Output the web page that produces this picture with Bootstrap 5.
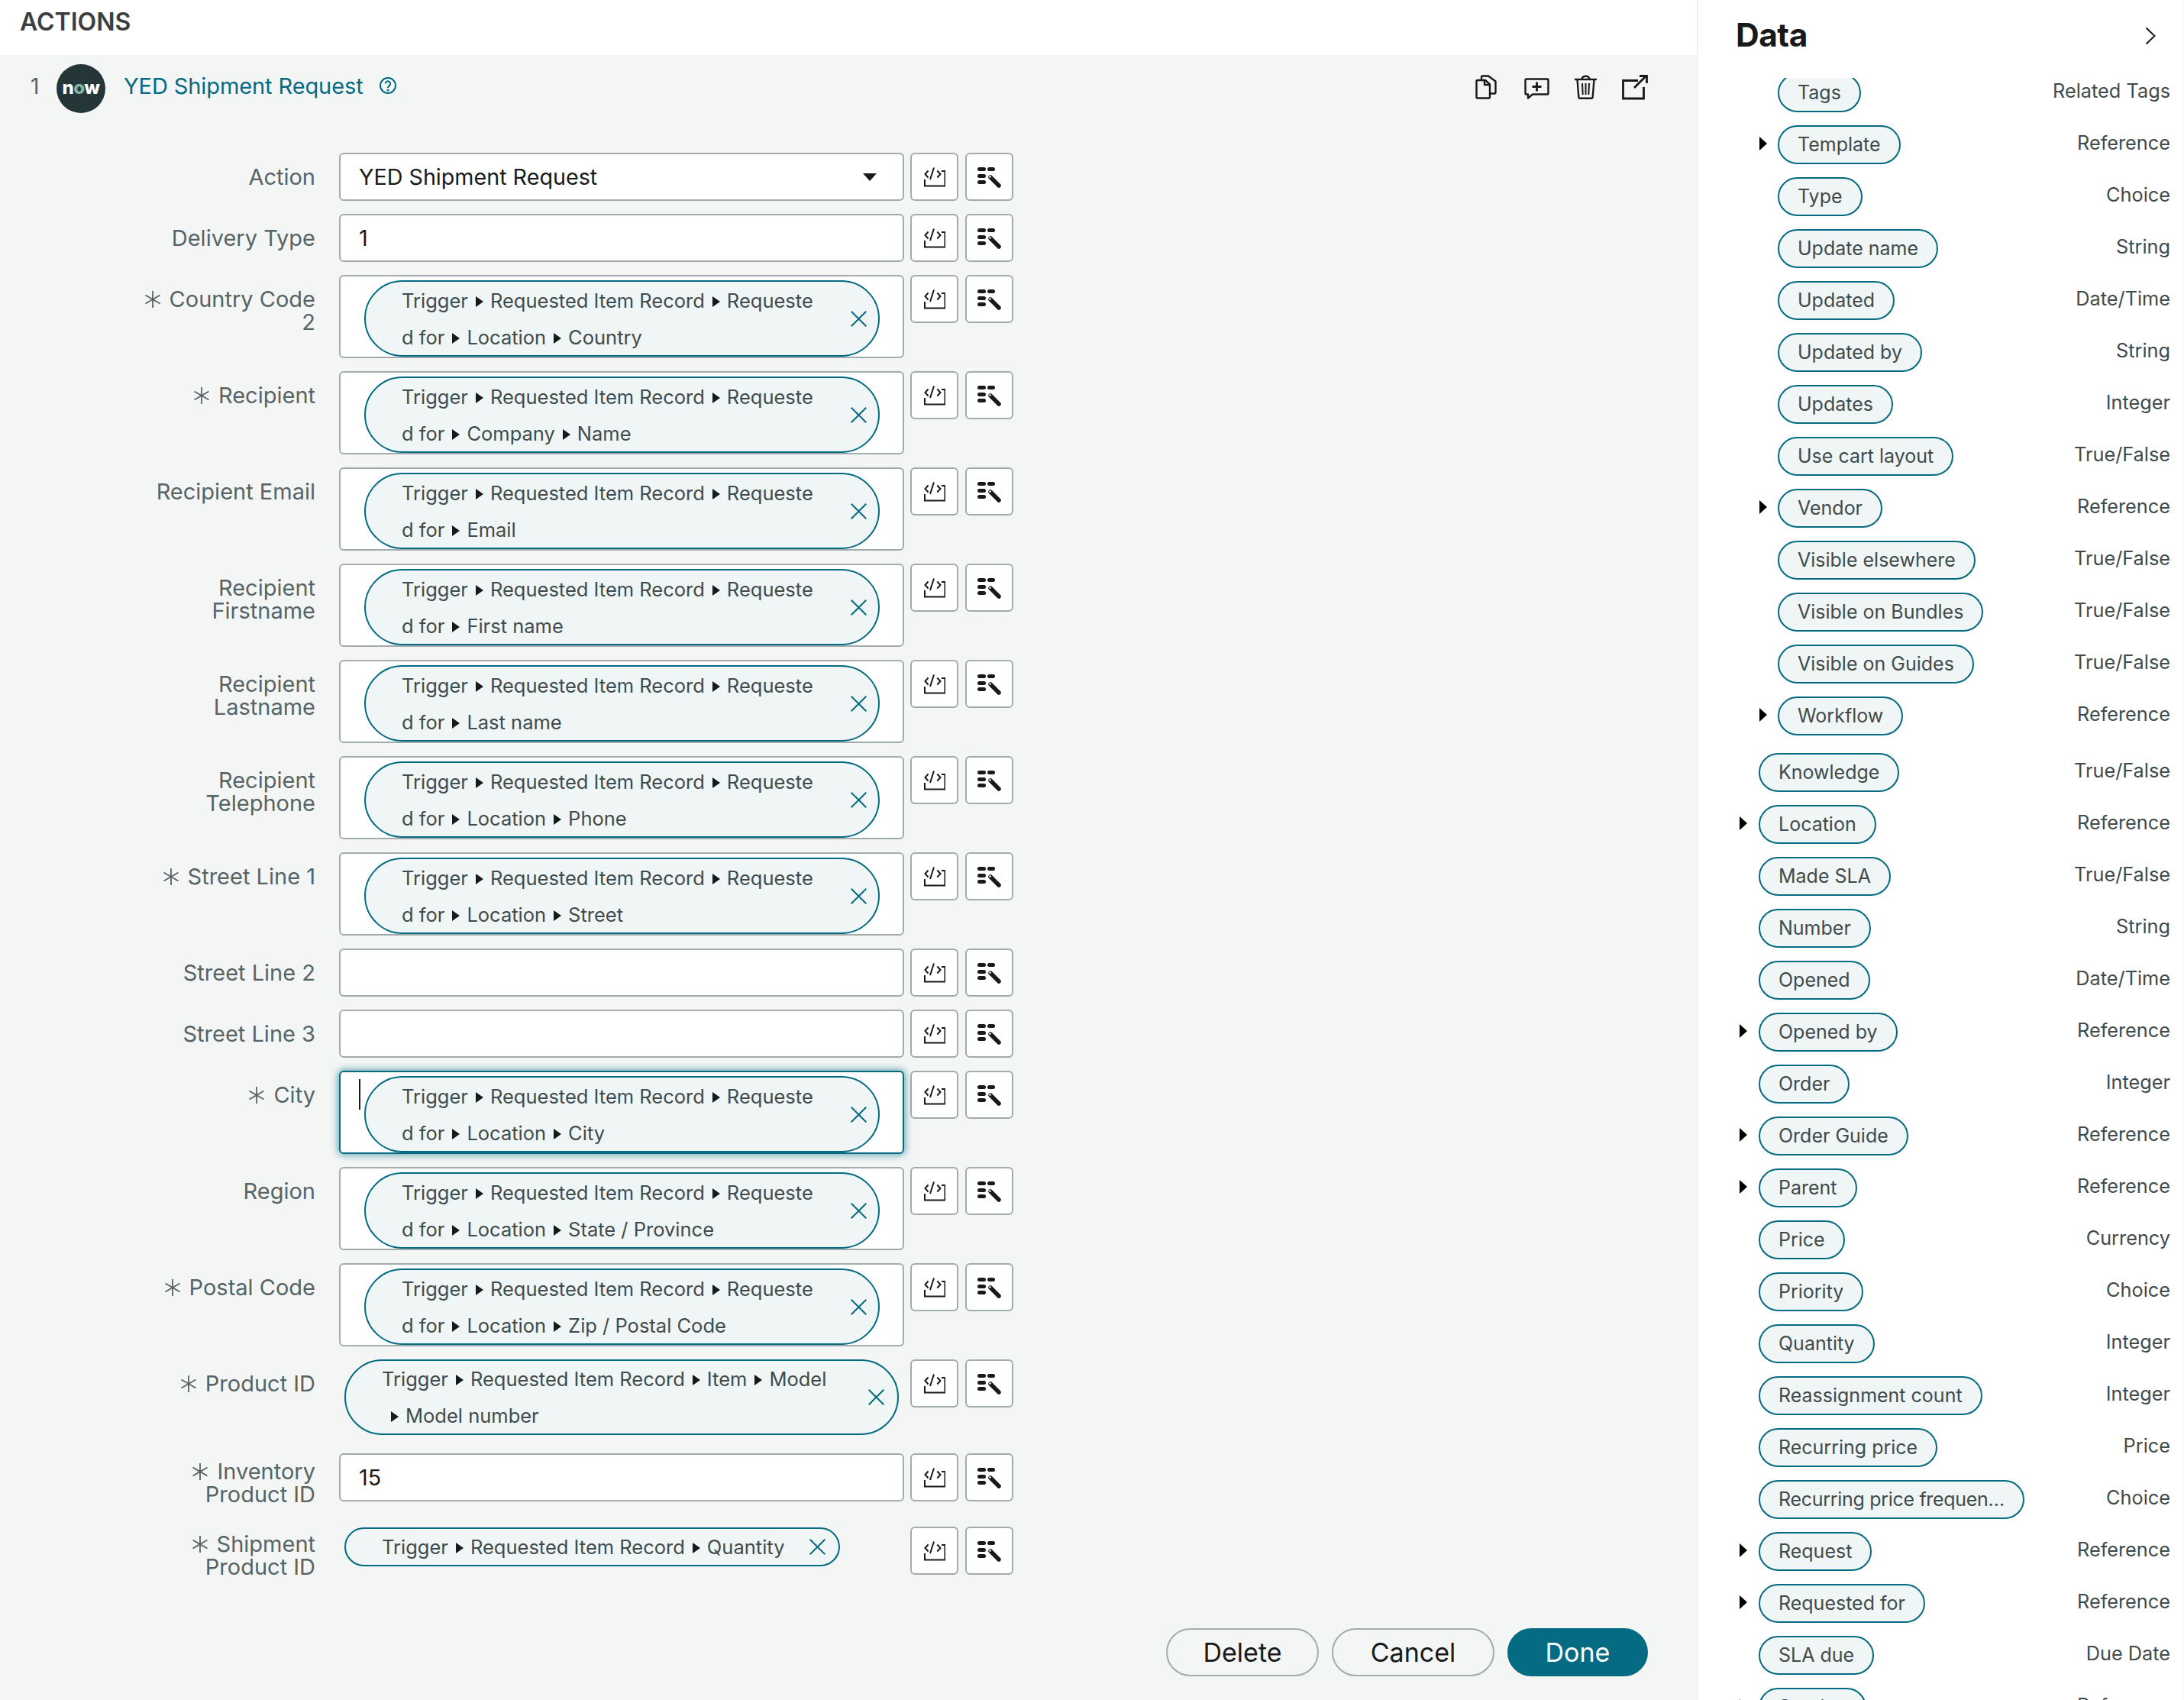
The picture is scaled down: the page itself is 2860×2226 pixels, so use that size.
<!DOCTYPE html>
<html lang="en">
<head>
  <meta charset="UTF-8" />
  <title>Actions</title>
  <link rel="stylesheet" href="https://cdn.jsdelivr.net/npm/bootstrap@5.3.0/dist/css/bootstrap.min.css"/>
  <style>
    :root {
      --teal: #046b82;
      --grey-line: #a3abac;
      --label: #566465;
      --ink: #3f4b4c;
    }
    html, body { height: 100%; }
    body {
      font-family: "Inter", "Noto Sans", sans-serif;
      background: #fff;
      color: var(--ink);
      width: 2860px;
      height: 2226px;
      overflow: hidden;
    }
    .left-panel { width: 2222px; height: 2226px; }
    .head-bar { height: 72px; padding: 8px 0 0 26px; font-size: 32px; font-weight: 600; color: #3b3f40; line-height: 42px; }
    .form-area { background: #f4f6f6; height: 2154px; }
    .title-row { height: 128px; padding: 12px 0 0 40px; }
    .step-no { width: 34px; font-size: 28px; color: var(--label); line-height: 58px; }
    .now-logo {
      width: 64px; height: 64px; border-radius: 50%; background: #243637;
      color: #fff; font-weight: 800; font-size: 24px; line-height: 62px; text-align: center; letter-spacing: -.5px;
    }
    .now-logo b { color: #81b5a1; font-weight: 800; }
    .action-title { color: var(--teal); font-size: 29px; margin-left: 24px; line-height: 58px; letter-spacing: -.1px; }
    .help-ico { margin-left: 20px; }
    .tool-icons { position: absolute; top: 98px; left: 1932px; display: flex; align-items: flex-start; }
    .tool-icons svg { display: block; }
    .field-row { display: flex; width: 1340px; margin-bottom: 17px; }
    .field-label {
      width: 413px; margin-right: 31px; text-align: right; padding-top: 17px;
      font-size: 29px; line-height: 30px; color: var(--label);
    }
    .field-label svg { margin-right: 11px; vertical-align: -1px; }
    .field-body { width: 740px; flex: none; }
    .field-box {
      background: #fff; border: 2px solid var(--grey-line); border-radius: 6px;
      height: 63px; padding: 0 24px; font-size: 28.7px; line-height: 58px; color: #181a1a;
      display: flex; justify-content: space-between; align-items: center;
    }
    .field-box.box-tall { height: 109px; padding: 5px 0 0 31px; align-items: flex-start; }
    .field-box.box-focus { border-color: var(--teal); box-shadow: 0 0 10px 2px rgba(4,107,130,.55); position: relative; }
    .text-caret { position: absolute; left: 24px; top: 9px; width: 2px; height: 40px; background: #181a1a; }
    .caret-down { width: 0; height: 0; border-left: 9px solid transparent; border-right: 9px solid transparent; border-top: 10px solid #181a1a; margin-right: 10px; }
    .data-pill {
      display: flex; align-items: center; justify-content: space-between;
      background: #f0f5f5; border: 2px solid var(--teal); color: var(--ink);
      font-size: 25.5px; line-height: 48px;
    }
    .pill-two > div { padding-top: 2px; }
    .pill-two { width: 675px; height: 100px; border-radius: 50px; padding: 0 15px 0 47px; }
    .pill-wide { width: 726px; height: 99px; border-radius: 50px; margin-left: 7px; padding: 0 17px 0 47px; }
    .pill-one { width: 649px; height: 51px; border-radius: 26px; margin: 1px 0 0 7px; padding: 0 17px 0 47px; line-height: 46px; }
    .arrow-r {
      display: inline-block; width: 0; height: 0; margin: 0 9px 2px 10px; vertical-align: middle;
      border-top: 7px solid transparent; border-bottom: 7px solid transparent; border-left: 10px solid #181a1a;
    }
    .arrow-r.arrow-lead { margin-left: 12px; }
    .side-btns { display: flex; gap: 9px; margin-left: 8px; }
    .side-btn {
      width: 63px; height: 63px; background: #fff; border: 2px solid var(--grey-line); border-radius: 6px;
      display: flex; align-items: center; justify-content: center; padding: 0;
    }
    .foot-btns { position: absolute; left: 1527px; top: 2132px; display: flex; gap: 17px; }
    .pill-btn {
      height: 63px; border-radius: 32px; border: 2px solid var(--grey-line); background: transparent;
      font-size: 34px; color: #181a1a; line-height: 56px; padding: 0;
    }
    .pill-btn.btn-done { background: var(--teal); border-color: var(--teal); color: #fff; }
    .data-panel { width: 636px; height: 2226px; margin-left: 2px; background: #fff; box-shadow: -2px 0 0 #eef1f1, inset -3px 0 0 #f9fafa; }
    .data-head { height: 102px; padding: 19px 37px 0 49px; display: flex; justify-content: space-between; }
    .data-head h2 { font-size: 42.500px; font-weight: 700; color: #181a1a; margin: 0; line-height: 54px; letter-spacing: -.5px; }
    .data-list { height: 2124px; overflow: hidden; padding: 0 18px 0 0; margin-top: 0; }
    .data-list-inner { margin-top: -6px; }
    .data-row { display: flex; align-items: center; height: 51px; margin-bottom: 17px; position: relative; }
    .data-row.gap-top { margin-top: 23px; }
    .data-row .arrow-side {
      position: absolute; width: 0; height: 0;
      border-top: 9px solid transparent; border-bottom: 9px solid transparent; border-left: 10px solid #000;
    }
    .tag-pill {
      height: 51px; border: 2px solid var(--teal); background: #f0f5f5; border-radius: 26px;
      padding: 0 24px; font-size: 25px; line-height: 46px; color: var(--ink); white-space: nowrap;
    }
    .tag-tight { letter-spacing: -.3px; }
    .lvl-0 { padding-left: 79px; }
    .lvl-0 .arrow-side { left: 54px; top: 15px; }
    .lvl-1 { padding-left: 104px; }
    .lvl-1 .arrow-side { left: 80px; top: 15px; }
    .type-name { margin-left: auto; font-size: 25.3px; color: var(--ink); margin-top: -5px; }
  </style>
</head>
<body>
  <div class="d-flex">
    <div class="left-panel">
      <div class="head-bar">ACTIONS</div>
      <div class="form-area">
        <div class="title-row d-flex">
          <div class="step-no">1</div>
          <div class="now-logo">n<b>o</b>w</div>
          <div class="action-title">YED Shipment Request</div>
          <svg class="help-ico align-self-start mt-3" width="24" height="24" viewBox="0 0 24 24" fill="none" stroke="#046b82" stroke-width="2"><circle cx="12" cy="12" r="10"/><path d="M8.800 9.600a3.200 3.200 0 1 1 4.900 2.700c-1.100.7-1.700 1.200-1.700 2.600"/><circle cx="12" cy="18" r=".6"/></svg>
        </div>
        <div id="fields"></div>
      </div>
      <div class="tool-icons">
        <svg width="28" height="32" viewBox="0 0 28 32" fill="none" stroke="#181a1a" stroke-width="2.400" stroke-linejoin="round"><path d="M8 6V3a1.500 1.500 0 0 1 1.500-1.500H17l9.500 7V23a1.500 1.500 0 0 1-1.500 1.500h-6"/><path d="M3 7h10l6 5.500V29a1.500 1.500 0 0 1-1.500 1.500H3A1.500 1.500 0 0 1 1.500 29V8.500A1.500 1.500 0 0 1 3 7z"/><path d="M12 7v6h7"/></svg>
        <svg style="margin-left:36px;margin-top:4px" width="33" height="28" viewBox="0 0 33 28" fill="none" stroke="#181a1a" stroke-width="2.400" stroke-linejoin="round"><path d="M3 1.500h27A1.500 1.500 0 0 1 31.500 3v17a1.500 1.500 0 0 1-1.500 1.500H11L5 26.500v-5H3A1.500 1.500 0 0 1 1.500 20V3A1.500 1.500 0 0 1 3 1.500z"/><path d="M16.500 5.500v12M10.500 11.500h12" stroke-width="2.800"/></svg>
        <svg style="margin-left:33px" width="29" height="32" viewBox="0 0 29 32" fill="none" stroke="#181a1a" stroke-width="2.400" stroke-linejoin="round"><path d="M0 6h29"/><path d="M9.500 5.500c0-5 10-5 10 0"/><path d="M3.500 6l1.800 23a2 2 0 0 0 2 1.800h14.400a2 2 0 0 0 2-1.800L25.500 6"/><path d="M10 11l.7 15M14.500 11v15M19 11l-.7 15" stroke-width="2"/></svg>
        <svg style="margin-left:33px;margin-top:-1px" width="36" height="34" viewBox="0 0 36 34" fill="none" stroke="#181a1a" stroke-width="2.800"><path d="M21 8.500H1.500V32h27V17"/><path d="M16 18L31 3"/><path d="M23 2.500h9.500V12"/></svg>
      </div>
      <div class="foot-btns">
        <button type="button" class="pill-btn" style="width:200px">Delete</button>
        <button type="button" class="pill-btn" style="width:213px">Cancel</button>
        <button type="button" class="pill-btn btn-done" style="width:184px">Done</button>
      </div>
    </div>
    <div class="data-panel">
      <div class="data-head">
        <h2>Data</h2>
        <svg class="mt-3" width="14" height="24" viewBox="0 0 14 24" fill="none" stroke="#181a1a" stroke-width="2"><path d="M1.500 1.500L12.500 12 1.500 22.500"/></svg>
      </div>
      <div class="data-list"><div class="data-list-inner" id="dataList"></div></div>
    </div>
  </div>

  <script>
const ARROW = '<span class="arrow-r"></span>';
const STAR = '<svg width="22" height="22" viewBox="0 0 22 22" stroke="#566465" stroke-width="1.800"><path d="M11 0v22M1.500 5.500l19 11M20.500 5.500l-19 11"/></svg>';
const BTN_ICONS = `
  <div class="side-btns">
    <button type="button" class="side-btn"><svg width="28" height="26" viewBox="0 0 28 26" fill="none" stroke="#181a1a" stroke-width="2"><path d="M23 5h4.500v19.500H1V16"/><path d="M5.600 4.500L1.500 9l4.100 4.500M17.300 4.500L21.500 9l-4.200 4.500M8 16l5-15.500"/></svg></button>
    <button type="button" class="side-btn"><svg width="31" height="28" viewBox="0 0 31 28"><g fill="#181a1a"><rect x="0" y="1" width="11" height="5" rx="2.500"/><rect x="13" y="1" width="10" height="5" rx="2.500"/><rect x="0" y="10" width="11" height="5" rx="2.500"/><rect x="0" y="18" width="11" height="5" rx="2.500"/></g><path d="M17 14L28 25" stroke="#181a1a" stroke-width="5.500" stroke-linecap="round"/><circle cx="16.500" cy="13.500" r="1.300" fill="#fff"/></svg></button>
  </div>`;
const X_ICON = '<svg class="flex-shrink-0" width="21" height="21" viewBox="0 0 21 21" fill="none" stroke="#046b82" stroke-width="2"><path d="M.7.7l19.600 19.600M20.300.7L.7 20.300"/></svg>';

function line(parts) { return parts.join(ARROW); }
function two(last) {
  return `<div>${line(['Trigger','Requested Item Record','Requeste'])}<br>${line(['d for'].concat(last))}</div>${X_ICON}`;
}

// label, required, kind, value, label top padding, margin below
const rows = [
  ['Action', 0, 'select', 'YED Shipment Request'],
  ['Delivery Type', 0, 'text', '1'],
  ['Country Code<br>2', 1, 'tall', ['Location','Country']],
  ['Recipient', 1, 'tall', ['Company','Name']],
  ['Recipient Email', 0, 'tall', ['Email']],
  ['Recipient<br>Firstname', 0, 'tall', ['First name']],
  ['Recipient<br>Lastname', 0, 'tall', ['Last name']],
  ['Recipient<br>Telephone', 0, 'tall', ['Location','Phone']],
  ['Street Line 1', 1, 'tall', ['Location','Street']],
  ['Street Line 2', 0, 'text', ''],
  ['Street Line 3', 0, 'text', ''],
  ['City', 1, 'focus', ['Location','City']],
  ['Region', 0, 'tall', ['Location','State / Province']],
  ['Postal Code', 1, 'tall', ['Location','Zip / Postal Code']],
  ['Product ID', 1, 'wide', '', 17, 24],
  ['Inventory<br>Product ID', 1, 'text', '15', 9, 27],
  ['Shipment<br>Product ID', 1, 'one', '', 8, 0]
];

const fieldsEl = document.getElementById('fields');
rows.forEach(r => {
  const [label, req, kind, val, pt, mb] = r;
  let body = '';
  if (kind === 'select') body = `<div class="field-box"><span>${val}</span><span class="caret-down"></span></div>`;
  if (kind === 'text') body = `<div class="field-box">${val}</div>`;
  if (kind === 'tall') body = `<div class="field-box box-tall"><div class="data-pill pill-two">${two(val)}</div></div>`;
  if (kind === 'focus') body = `<div class="field-box box-tall box-focus"><span class="text-caret"></span><div class="data-pill pill-two">${two(val)}</div></div>`;
  if (kind === 'wide') body = `<div class="data-pill pill-wide"><div>${line(['Trigger','Requested Item Record','Item','Model'])}<br><span class="arrow-r arrow-lead"></span>Model number</div>${X_ICON}</div>`;
  if (kind === 'one') body = `<div class="data-pill pill-one"><div>${line(['Trigger','Requested Item Record','Quantity'])}</div>${X_ICON}</div>`;
  const row = document.createElement('div');
  row.className = 'field-row';
  if (mb !== undefined) row.style.marginBottom = mb + 'px';
  row.innerHTML = `<div class="field-label"${pt ? ` style="padding-top:${pt}px"` : ''}>${req ? STAR : ''}${label}</div>
    <div class="field-body">${body}</div>${BTN_ICONS}`;
  fieldsEl.appendChild(row);
});

// name, type, has children
const nested = [
  ['Tags','Related Tags',0],['Template','Reference',1],['Type','Choice',0],['Update name','String',0],
  ['Updated','Date/Time',0],['Updated by','String',0],['Updates','Integer',0],['Use cart layout','True/False',0],
  ['Vendor','Reference',1],['Visible elsewhere','True/False',0],['Visible on Bundles','True/False',0],
  ['Visible on Guides','True/False',0],['Workflow','Reference',1]
];
const top_ = [
  ['Knowledge','True/False',0],['Location','Reference',1],['Made SLA','True/False',0],['Number','String',0],
  ['Opened','Date/Time',0],['Opened by','Reference',1],['Order','Integer',0],['Order Guide','Reference',1],
  ['Parent','Reference',1],['Price','Currency',0],['Priority','Choice',0],['Quantity','Integer',0],
  ['Reassignment count','Integer',0],['Recurring price','Price',0],['Recurring price frequen…','Choice',0,'tag-tight'],
  ['Request','Reference',1],['Requested for','Reference',1],['SLA due','Due Date',0],['Service','Reference',1]
];
const listEl = document.getElementById('dataList');
function addRow(item, cls) {
  const el = document.createElement('div');
  el.className = 'data-row ' + cls;
  el.innerHTML = `${item[2] ? '<span class="arrow-side"></span>' : ''}<span class="tag-pill ${item[3] || ''}">${item[0]}</span><span class="type-name">${item[1]}</span>`;
  listEl.appendChild(el);
}
nested.forEach(i => addRow(i, 'lvl-1'));
top_.forEach((i, n) => addRow(i, n === 0 ? 'lvl-0 gap-top' : 'lvl-0'));
  </script>
</body>
</html>
